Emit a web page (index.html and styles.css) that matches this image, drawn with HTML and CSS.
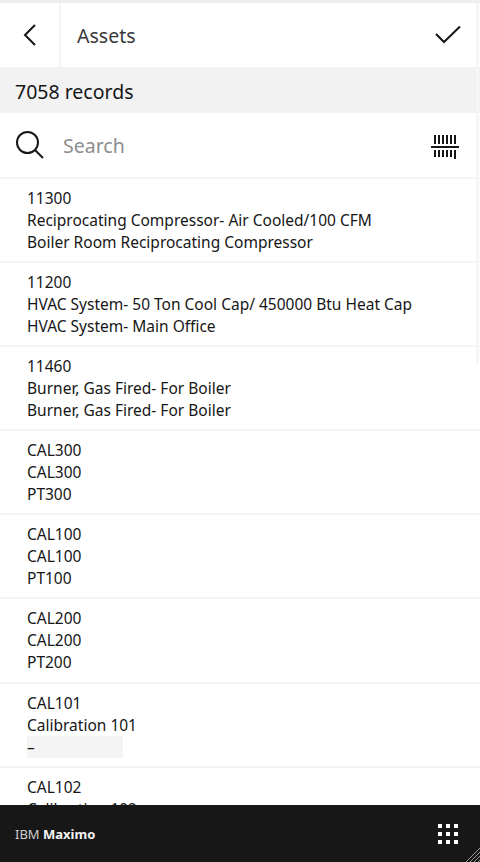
FILE: index.html
```html
<!DOCTYPE html>
<html lang="en">
<head>
    <meta charset="UTF-8">
    <meta name="viewport" content="width=device-width, initial-scale=1.0">
    <title>Assets</title>
    <link rel="stylesheet" href="styles.css">
</head>
<body>
    <div class="app">
        <header class="topBar">
            <button class="backBtn" aria-label="Back">
                <svg width="14" height="22" viewBox="0 0 14 22"><path d="M12 1 2 11l10 10" fill="none" stroke="#161616" stroke-width="2"/></svg>
            </button>
            <h1 class="title">Assets</h1>
            <button class="doneBtn" aria-label="Done">
                <svg width="26" height="20" viewBox="0 0 26 20"><path d="M1 9l8 8L25 1.500" fill="none" stroke="#161616" stroke-width="2"/></svg>
            </button>
        </header>

        <div class="recordCount">7058 records</div>

        <div class="searchBar">
            <svg class="searchIcon" width="30" height="30" viewBox="0 0 30 30"><circle cx="12.500" cy="12.500" r="10.500" fill="none" stroke="#161616" stroke-width="2"/><path d="M20 20l8 8" stroke="#161616" stroke-width="2"/></svg>
            <span class="searchText">Search</span>
            <svg class="barcodeIcon" width="28" height="26" viewBox="0 0 28 26">
                <path d="M0 13h28" stroke="#161616" stroke-width="2"/>
                <path d="M4 1v9M8 1v9M12 1v9M16 1v9M20 1v9M24 1v9M4 16v7M8 16v7M12 16v7M16 16v7M20 16v7M24 16v9" stroke="#161616" stroke-width="2"/>
            </svg>
        </div>

        <ul class="assetList">
            <li><div>11300</div><div>Reciprocating Compressor- Air Cooled/100 CFM</div><div>Boiler Room Reciprocating Compressor</div></li>
            <li><div>11200</div><div>HVAC System- 50 Ton Cool Cap/ 450000 Btu Heat Cap</div><div>HVAC System- Main Office</div></li>
            <li><div>11460</div><div>Burner, Gas Fired- For Boiler</div><div>Burner, Gas Fired- For Boiler</div></li>
            <li><div>CAL300</div><div>CAL300</div><div>PT300</div></li>
            <li><div>CAL100</div><div>CAL100</div><div>PT100</div></li>
            <li><div>CAL200</div><div>CAL200</div><div>PT200</div></li>
            <li><div>CAL101</div><div>Calibration 101</div><div class="emptyValue">–</div></li>
            <li><div>CAL102</div><div>Calibration 102</div></li>
        </ul>

        <div class="scrollThumb"></div>

        <footer class="bottomBar">
            <span class="brand">IBM <b>Maximo</b></span>
            <div class="appGrid" aria-label="Apps">
                <i></i><i></i><i></i><i></i><i></i><i></i><i></i><i></i><i></i>
            </div>
            <svg class="resizeGrip" width="14" height="14" viewBox="0 0 14 14"><path d="M14 0 0 14M14 4 4 14M14 8 8 14M14 12 12 14" stroke="#9a9a9a" stroke-width="1"/></svg>
        </footer>
    </div>
</body>
</html>
```

FILE: styles.css
```css
html, body {
    margin: 0;
    height: 100%;
}

body {
    font-family: "Noto Sans", Arial, sans-serif;
    color: #161616;
    background-color: #fff;
}

.app {
    position: relative;
    height: 862px;
    display: flex;
    flex-direction: column;
    overflow: hidden;
    border-top: 3px solid #eeeeee;
    box-sizing: border-box;
}

button {
    background: none;
    border: none;
    padding: 0;
    cursor: pointer;
}

.topBar {
    flex: none;
    height: 64px;
    display: flex;
    align-items: center;
}

.backBtn {
    width: 61px;
    height: 64px;
    border-right: 2px solid #f4f4f4;
    box-sizing: border-box;
    padding-left: 1px;
    display: flex;
    align-items: center;
    justify-content: center;
}

.title {
    flex: 1;
    margin: 0 0 0 16px;
    font-size: 19.500px;
    font-weight: 400;
    color: #393939;
}

.doneBtn {
    width: 26px;
    height: 20px;
    margin-right: 19px;
}

.recordCount {
    flex: none;
    height: 46px;
    box-sizing: border-box;
    padding: 2px 0 0 15px;
    line-height: 46px;
    font-size: 19.500px;
    background-color: #f2f2f2;
}

.searchBar {
    flex: none;
    height: 66px;
    display: flex;
    align-items: center;
    padding-left: 15px;
    box-sizing: border-box;
    border-bottom: 2px solid #f4f4f4;
}

.searchText {
    flex: 1;
    margin-left: 18px;
    font-size: 19.500px;
    color: #8d8d8d;
}

.barcodeIcon {
    margin: 4px 21px 0 0;
}

.assetList {
    flex: 1;
    min-height: 0;
    list-style: none;
    margin: 0;
    padding: 0;
    overflow: hidden;
}

.assetList li {
    height: 84.100px;
    box-sizing: border-box;
    padding: 8px 27px 0;
    border-bottom: 2px solid #f4f4f4;
    font-size: 15.500px;
    line-height: 22px;
}

.emptyValue {
    width: 96px;
    background-color: #f4f4f4;
}

.scrollThumb {
    position: absolute;
    top: 0;
    right: 1px;
    width: 3px;
    height: 360px;
    background-color: #f5f5f5;
}

.bottomBar {
    flex: none;
    position: relative;
    height: 57px;
    display: flex;
    align-items: center;
    justify-content: space-between;
    padding: 0 22px 0 15px;
    background-color: #171717;
}

.brand {
    font-size: 13px;
    color: #d0d0d0;
}

.brand b {
    color: #f4f4f4;
}

.appGrid {
    display: grid;
    grid-template-columns: repeat(3, 4px);
    gap: 4px;
}

.appGrid i {
    width: 4px;
    height: 4px;
    background-color: #fff;
}

.resizeGrip {
    position: absolute;
    right: 0;
    bottom: 0;
}
```
